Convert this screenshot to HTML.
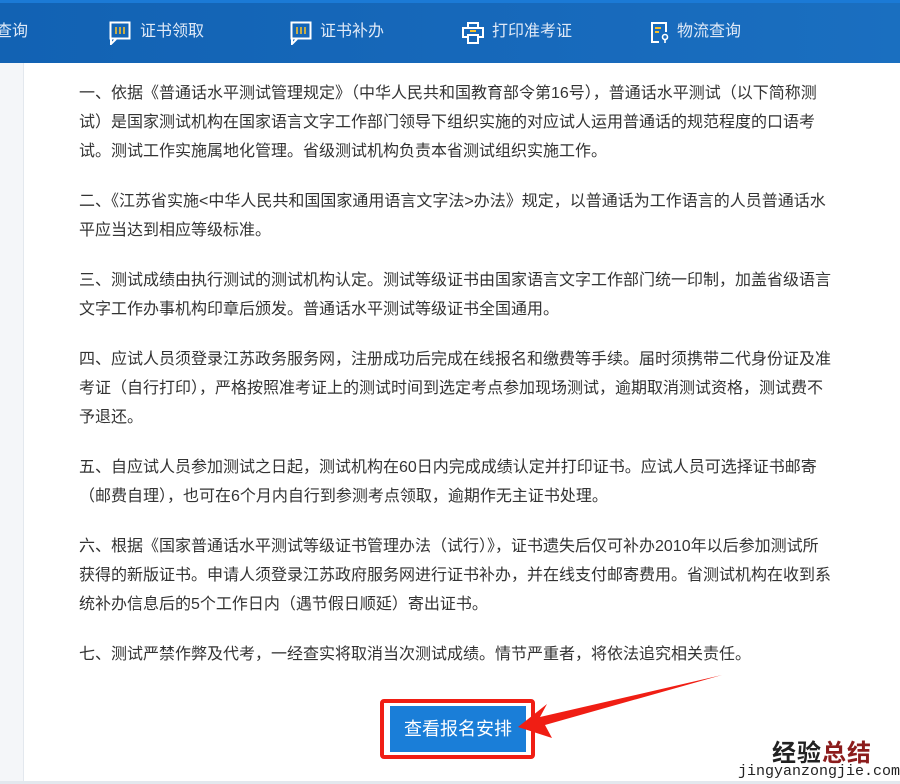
<!DOCTYPE html>
<html><head><meta charset="utf-8"><style>
body{margin:0;width:900px;height:784px;overflow:hidden;background:#fff;font-family:"Liberation Sans","Noto Sans CJK SC",sans-serif;position:relative}
.nav{position:absolute;left:0;top:0;width:900px;height:63px;background:linear-gradient(90deg,#1262b3 0%,#1769bb 60%,#1a6fc0 100%)}
.nav .top{position:absolute;left:0;top:0;width:900px;height:3px;background:#1b7ad6}
.ni{position:absolute;top:22px;color:#dfe9f7;font-size:16px;line-height:20px}
.side{position:absolute;left:0;top:63px;width:23px;height:721px;background:#f4f6f9;border-right:1px solid #e3e8ee}
.c{position:absolute;left:79px;top:79px;width:754px;color:#333;font-size:16px;line-height:29px}
.c p{margin:0 0 21px 0}
.btn{position:absolute;left:380px;top:699px;width:147px;height:52px;border:4px solid #f01e14;border-radius:4px;background:#fff}
.btn div{position:absolute;left:6px;top:3px;width:136px;height:46px;background:#1a7ed8;color:#fff;font-size:18px;line-height:46px;text-align:center}
.wm{position:absolute;left:772px;top:733px;font-size:24px;font-weight:bold;color:#222;letter-spacing:1px}
.wm2{position:absolute;left:738px;top:763px;font-size:15px;color:#222;font-family:"Liberation Mono",monospace}
</style></head><body>
<div class="nav"><div class="top"></div>
<div class="ni" style="left:-4px">查询</div>
<svg style="position:absolute;left:109px;top:21px" width="22" height="24"><rect x="1.5" y="1.5" width="19" height="16" fill="none" stroke="#fff" stroke-width="2"/><path d="M2 17 L2 23 L7 18" fill="none" stroke="#fff" stroke-width="2"/><path d="M7 6v7M11 6v7M15 6v7" stroke="#f6c02c" stroke-width="1.6"/></svg>
<div class="ni" style="left:140px">证书领取</div>
<svg style="position:absolute;left:290px;top:21px" width="22" height="24"><rect x="1.5" y="1.5" width="19" height="16" fill="none" stroke="#fff" stroke-width="2"/><path d="M2 17 L2 23 L7 18" fill="none" stroke="#fff" stroke-width="2"/><path d="M7 6v7M11 6v7M15 6v7" stroke="#f6c02c" stroke-width="1.6"/></svg>
<div class="ni" style="left:320px">证书补办</div>
<svg style="position:absolute;left:462px;top:22px" width="22" height="22"><rect x="6" y="1" width="10" height="5" fill="none" stroke="#fff" stroke-width="2"/><rect x="1" y="6" width="20" height="9" fill="none" stroke="#fff" stroke-width="2"/><rect x="6" y="13" width="10" height="8" fill="#1565b5" stroke="#fff" stroke-width="2"/><path d="M8 9h6" stroke="#f6c02c" stroke-width="2"/></svg>
<div class="ni" style="left:492px">打印准考证</div>
<svg style="position:absolute;left:650px;top:21px" width="20" height="24"><path d="M9 21H2V2h14v9" fill="none" stroke="#fff" stroke-width="2"/><path d="M5 7h6M5 11h4" stroke="#f6c02c" stroke-width="2"/><circle cx="15" cy="16" r="2.5" fill="none" stroke="#fff" stroke-width="1.6"/><path d="M15 18v4" stroke="#fff" stroke-width="1.6"/></svg>
<div class="ni" style="left:677px">物流查询</div>
</div>
<div class="side"></div>
<div class="c">
<p>一、依据《普通话水平测试管理规定》（中华人民共和国教育部令第16号），普通话水平测试（以下简称测<br>试）是国家测试机构在国家语言文字工作部门领导下组织实施的对应试人运用普通话的规范程度的口语考<br>试。测试工作实施属地化管理。省级测试机构负责本省测试组织实施工作。</p>
<p>二、《江苏省实施&lt;中华人民共和国国家通用语言文字法&gt;办法》规定，以普通话为工作语言的人员普通话水<br>平应当达到相应等级标准。</p>
<p>三、测试成绩由执行测试的测试机构认定。测试等级证书由国家语言文字工作部门统一印制，加盖省级语言<br>文字工作办事机构印章后颁发。普通话水平测试等级证书全国通用。</p>
<p>四、应试人员须登录江苏政务服务网，注册成功后完成在线报名和缴费等手续。届时须携带二代身份证及准<br>考证（自行打印），严格按照准考证上的测试时间到选定考点参加现场测试，逾期取消测试资格，测试费不<br>予退还。</p>
<p>五、自应试人员参加测试之日起，测试机构在60日内完成成绩认定并打印证书。应试人员可选择证书邮寄<br>（邮费自理），也可在6个月内自行到参测考点领取，逾期作无主证书处理。</p>
<p>六、根据《国家普通话水平测试等级证书管理办法（试行）》，证书遗失后仅可补办2010年以后参加测试所<br>获得的新版证书。申请人须登录江苏政府服务网进行证书补办，并在线支付邮寄费用。省测试机构在收到系<br>统补办信息后的5个工作日内（遇节假日顺延）寄出证书。</p>
<p>七、测试严禁作弊及代考，一经查实将取消当次测试成绩。情节严重者，将依法追究相关责任。</p>
</div>
<div class="btn"><div>查看报名安排</div></div>
<svg style="position:absolute;left:0;top:0" width="900" height="784"><path d="M722 675 L540 717 L547 704 L518 727 L552 738 L545 725 Z" fill="#f01e14"/></svg>
<div class="wm">经验<span style="color:#8b1c1c">总结</span></div>
<div class="wm2">jingyanzongjie.com</div>
<div style="position:absolute;left:0;top:781px;width:900px;height:3px;background:#e3e8ee"></div>
</body></html>
